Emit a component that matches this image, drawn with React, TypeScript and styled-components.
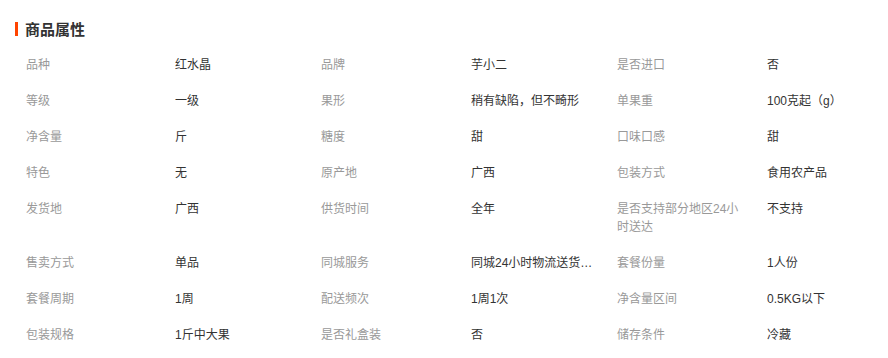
import React from "react";
import styled, { createGlobalStyle } from "styled-components";

const GlobalStyle = createGlobalStyle`
  html, body { margin: 0; padding: 0; background: #fff; }
  body { font-family: "Liberation Sans", "Noto Sans CJK SC", sans-serif; }
`;

const Section = styled.section`
  width: 888px;
  padding: 22px 0 0 15px;
  box-sizing: border-box;
`;

const Title = styled.h3`
  margin: 0;
  padding-left: 7px;
  border-left: 3px solid #ff4400;
  font-size: 15px;
  line-height: 14px;
  font-weight: bold;
  color: #333;
  font-family: "Noto Sans CJK SC", sans-serif;
`;

const Grid = styled.div`
  display: grid;
  grid-template-columns: 149px 146px 150px 146px 150px 146px;
  margin-top: 11px;
  padding-left: 11px;
  align-items: start;
`;

const Label = styled.div`
  padding: 9px 20px 9px 0;
  font-size: 12px;
  line-height: 18px;
  color: #999;
  word-break: break-all;
`;

const Value = styled.div`
  padding: 9px 18px 9px 0;
  font-size: 12px;
  line-height: 18px;
  color: #333;
  white-space: nowrap;
  overflow: hidden;
  text-overflow: ellipsis;
`;

const rows: [string, string][][] = [
  [["品种", "红水晶"], ["品牌", "芋小二"], ["是否进口", "否"]],
  [["等级", "一级"], ["果形", "稍有缺陷，但不畸形"], ["单果重", "100克起（g）"]],
  [["净含量", "斤"], ["糖度", "甜"], ["口味口感", "甜"]],
  [["特色", "无"], ["原产地", "广西"], ["包装方式", "食用农产品"]],
  [["发货地", "广西"], ["供货时间", "全年"], ["是否支持部分地区24小时送达", "不支持"]],
  [["售卖方式", "单品"], ["同城服务", "同城24小时物流送货上门"], ["套餐份量", "1人份"]],
  [["套餐周期", "1周"], ["配送频次", "1周1次"], ["净含量区间", "0.5KG以下"]],
  [["包装规格", "1斤中大果"], ["是否礼盒装", "否"], ["储存条件", "冷藏"]],
];

export default function App() {
  return (
    <>
      <GlobalStyle />
      <Section>
        <Title>商品属性</Title>
        <Grid>
          {rows.flatMap((row, ri) =>
            row.flatMap(([k, v], ci) => [
              <Label key={`l${ri}-${ci}`}>{k}</Label>,
              <Value key={`v${ri}-${ci}`}>{v}</Value>,
            ])
          )}
        </Grid>
      </Section>
    </>
  );
}
